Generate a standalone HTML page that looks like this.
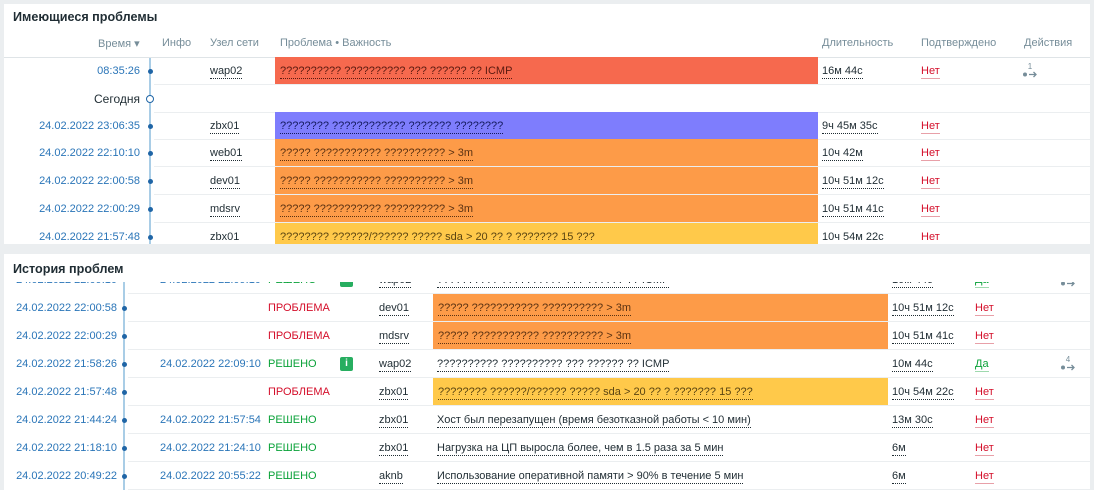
<!DOCTYPE html>
<html><head><meta charset="utf-8">
<style>
*{margin:0;padding:0;box-sizing:border-box}
body{width:1094px;height:490px;overflow:hidden;background:#ebeef0;font-family:"Liberation Sans",Arial,sans-serif;font-size:11px;color:#1f2c33;position:relative}
.panel{position:absolute;left:4px;width:1086px;background:#fff;overflow:hidden}
.h{position:absolute;left:9px;font-size:12.6px;font-weight:bold;color:#1f2c33}
.row{position:absolute;left:0;width:1086px;height:28px;line-height:28px}
.sep{position:absolute;height:1px;background:#ebeef0}
.c{position:absolute;top:0;white-space:nowrap}
.t{color:#2a75b8;text-align:right}
.u{border-bottom:1px dotted #1f2c33;line-height:13px;display:inline-block}
.nk{color:#d40e2a;border-bottom:1px solid #e8a0a8;line-height:13px;display:inline-block}
.da{color:#0aa239;border-bottom:1px solid #9fd9ae;line-height:13px;display:inline-block}
.prob{color:#d40e2a}
.ok{color:#0aa239}
.box{position:absolute;top:0;height:27px;padding-left:5px}
.dot{position:absolute;width:5px;height:5px;border-radius:50%;background:#1f65a6;top:12px}
.vl{position:absolute;width:2px;background:#a9cde6}
.gh{position:absolute;color:#768d99;font-size:11px}
.ic{position:absolute;top:7px;width:13px;height:14px;background:#27ae60;border-radius:2px;color:#fff;font-size:10px;font-weight:bold;line-height:14px;text-align:center}
.act{position:absolute;top:6px;color:#768d99;font-size:8px;line-height:8px;text-align:center;width:16px}
</style></head><body>

<div class="panel" style="top:4px;height:240px">
<div class="h" style="top:6px">Имеющиеся проблемы</div>
<div class="gh" style="left:94px;top:33px">Время ▾</div>
<div class="gh" style="left:158px;top:33px">Инфо</div>
<div class="gh" style="left:206px;top:33px">Узел сети</div>
<div class="gh" style="left:276px;top:33px">Проблема • Важность</div>
<div class="gh" style="left:818px;top:33px">Длительность</div>
<div class="gh" style="left:917px;top:33px">Подтверждено</div>
<div class="gh" style="left:1020px;top:33px">Действия</div>
<div class="sep" style="left:0;width:1086px;top:53px;background:#dfe4e7"></div>
<div class="vl" style="left:145px;top:54px;height:190px"></div>

<div class="row" style="top:53px">
 <div class="c t" style="left:0;width:136px">08:35:26</div><div class="dot" style="left:144px"></div>
 <div class="c" style="left:206px"><span class="u">wap02</span></div>
 <div class="box" style="left:271px;width:543px;background:#f6694e"><span class="u" style="color:#5a1a10;border-color:#5a1a10">?????????? ?????????? ??? ?????? ?? ICMP</span></div>
 <div class="c" style="left:818px"><span class="u">16м 44с</span></div>
 <div class="c" style="left:917px"><span class="nk">Нет</span></div>
 <div class="act" style="left:1018px">1<br><svg width="16" height="7" viewBox="0 0 16 7"><circle cx="3" cy="3.5" r="2" fill="#768d99"/><path d="M7 3.5h7M11.5 1l2.5 2.5-2.5 2.5" stroke="#768d99" stroke-width="1.3" fill="none"/></svg></div>
 <div class="sep" style="left:150px;width:936px;top:27px"></div>
</div>
<div class="row" style="top:81px">
 <div class="c" style="left:0;width:136px;text-align:right;font-size:12px;color:#1f2c33">Сегодня</div>
 <div style="position:absolute;left:142px;top:10px;width:8px;height:8px;border-radius:50%;border:1.5px solid #1f65a6;background:#fff"></div>
 <div class="sep" style="left:150px;width:936px;top:27px"></div>
</div>
<div class="row" style="top:108px">
 <div class="c t" style="left:0;width:136px">24.02.2022 23:06:35</div><div class="dot" style="left:144px"></div>
 <div class="c" style="left:206px"><span class="u">zbx01</span></div>
 <div class="box" style="left:271px;width:543px;background:#7e7dfd"><span class="u" style="color:#141a5e;border-color:#141a5e">???????? ???????????? ??????? ????????</span></div>
 <div class="c" style="left:818px"><span class="u">9ч 45м 35с</span></div>
 <div class="c" style="left:917px"><span class="nk">Нет</span></div>
 <div class="sep" style="left:150px;width:936px;top:27px"></div>
</div>
<div class="row" style="top:135px">
 <div class="c t" style="left:0;width:136px">24.02.2022 22:10:10</div><div class="dot" style="left:144px"></div>
 <div class="c" style="left:206px"><span class="u">web01</span></div>
 <div class="box" style="left:271px;width:543px;background:#fd9b48"><span class="u" style="color:#5b3212;border-color:#5b3212">????? ??????????? ?????????? &gt; 3m</span></div>
 <div class="c" style="left:818px"><span class="u">10ч 42м</span></div>
 <div class="c" style="left:917px"><span class="nk">Нет</span></div>
 <div class="sep" style="left:150px;width:936px;top:27px"></div>
</div>
<div class="row" style="top:163px">
 <div class="c t" style="left:0;width:136px">24.02.2022 22:00:58</div><div class="dot" style="left:144px"></div>
 <div class="c" style="left:206px"><span class="u">dev01</span></div>
 <div class="box" style="left:271px;width:543px;background:#fd9b48"><span class="u" style="color:#5b3212;border-color:#5b3212">????? ??????????? ?????????? &gt; 3m</span></div>
 <div class="c" style="left:818px"><span class="u">10ч 51м 12с</span></div>
 <div class="c" style="left:917px"><span class="nk">Нет</span></div>
 <div class="sep" style="left:150px;width:936px;top:27px"></div>
</div>
<div class="row" style="top:191px">
 <div class="c t" style="left:0;width:136px">24.02.2022 22:00:29</div><div class="dot" style="left:144px"></div>
 <div class="c" style="left:206px"><span class="u">mdsrv</span></div>
 <div class="box" style="left:271px;width:543px;background:#fd9b48"><span class="u" style="color:#5b3212;border-color:#5b3212">????? ??????????? ?????????? &gt; 3m</span></div>
 <div class="c" style="left:818px"><span class="u">10ч 51м 41с</span></div>
 <div class="c" style="left:917px"><span class="nk">Нет</span></div>
 <div class="sep" style="left:150px;width:936px;top:27px"></div>
</div>
<div class="row" style="top:219px">
 <div class="c t" style="left:0;width:136px">24.02.2022 21:57:48</div><div class="dot" style="left:144px"></div>
 <div class="c" style="left:206px"><span class="u">zbx01</span></div>
 <div class="box" style="left:271px;width:543px;background:#ffc94a"><span class="u" style="color:#5b4512;border-color:#5b4512">???????? ??????/?????? ????? sda &gt; 20 ?? ? ??????? 15 ???</span></div>
 <div class="c" style="left:818px"><span class="u">10ч 54м 22с</span></div>
 <div class="c" style="left:917px"><span class="nk">Нет</span></div>
</div>
</div>

<div class="panel" style="top:254px;height:236px">
<div class="h" style="top:8px">История проблем</div>
<div style="position:absolute;left:0;top:28px;width:1086px;height:208px;overflow:hidden">
<div class="vl" style="left:119px;top:0;height:208px"></div>
<div class="row" style="top:-16px">
 <div class="c t" style="left:0;width:113px">24.02.2022 22:09:10</div>
 <div class="c t" style="left:156px">24.02.2022 22:09:10</div>
 <div class="c ok" style="left:264px">РЕШЕНО</div>
 <div class="ic" style="left:336px">i</div>
 <div class="c" style="left:375px"><span class="u">wap02</span></div>
 <div class="c" style="left:433px"><span class="u">?????????? ?????????? ??? ?????? ?? ICMP</span></div>
 <div class="c" style="left:888px"><span class="u">10м 44с</span></div>
 <div class="c" style="left:971px"><span class="da">Да</span></div>
 <div class="act" style="left:1056px;top:14px"><svg width="16" height="7" viewBox="0 0 16 7"><circle cx="3" cy="3.5" r="2" fill="#768d99"/><path d="M7 3.5h7M11.5 1l2.5 2.5-2.5 2.5" stroke="#768d99" stroke-width="1.3" fill="none"/></svg></div>
 <div class="sep" style="left:124px;width:962px;top:27px"></div>
</div>
<div class="row" style="top:12px">
 <div class="c t" style="left:0;width:113px">24.02.2022 22:00:58</div><div class="dot" style="left:118px"></div>
 <div class="c prob" style="left:264px">ПРОБЛЕМА</div>
 <div class="c" style="left:375px"><span class="u">dev01</span></div>
 <div class="box" style="left:429px;width:455px;background:#fd9b48"><span class="u" style="color:#5b3212;border-color:#5b3212">????? ??????????? ?????????? &gt; 3m</span></div>
 <div class="c" style="left:888px"><span class="u">10ч 51м 12с</span></div>
 <div class="c" style="left:971px"><span class="nk">Нет</span></div>
 <div class="sep" style="left:124px;width:962px;top:27px"></div>
</div>
<div class="row" style="top:40px">
 <div class="c t" style="left:0;width:113px">24.02.2022 22:00:29</div><div class="dot" style="left:118px"></div>
 <div class="c prob" style="left:264px">ПРОБЛЕМА</div>
 <div class="c" style="left:375px"><span class="u">mdsrv</span></div>
 <div class="box" style="left:429px;width:455px;background:#fd9b48"><span class="u" style="color:#5b3212;border-color:#5b3212">????? ??????????? ?????????? &gt; 3m</span></div>
 <div class="c" style="left:888px"><span class="u">10ч 51м 41с</span></div>
 <div class="c" style="left:971px"><span class="nk">Нет</span></div>
 <div class="sep" style="left:124px;width:962px;top:27px"></div>
</div>
<div class="row" style="top:68px">
 <div class="c t" style="left:0;width:113px">24.02.2022 21:58:26</div><div class="dot" style="left:118px"></div>
 <div class="c t" style="left:156px">24.02.2022 22:09:10</div>
 <div class="c ok" style="left:264px">РЕШЕНО</div>
 <div class="ic" style="left:336px">i</div>
 <div class="c" style="left:375px"><span class="u">wap02</span></div>
 <div class="c" style="left:433px"><span class="u">?????????? ?????????? ??? ?????? ?? ICMP</span></div>
 <div class="c" style="left:888px"><span class="u">10м 44с</span></div>
 <div class="c" style="left:971px"><span class="da">Да</span></div>
 <div class="act" style="left:1056px">4<br><svg width="16" height="7" viewBox="0 0 16 7"><circle cx="3" cy="3.5" r="2" fill="#768d99"/><path d="M7 3.5h7M11.5 1l2.5 2.5-2.5 2.5" stroke="#768d99" stroke-width="1.3" fill="none"/></svg></div>
 <div class="sep" style="left:124px;width:962px;top:27px"></div>
</div>
<div class="row" style="top:96px">
 <div class="c t" style="left:0;width:113px">24.02.2022 21:57:48</div><div class="dot" style="left:118px"></div>
 <div class="c prob" style="left:264px">ПРОБЛЕМА</div>
 <div class="c" style="left:375px"><span class="u">zbx01</span></div>
 <div class="box" style="left:429px;width:455px;background:#ffc94a"><span class="u" style="color:#5b4512;border-color:#5b4512">???????? ??????/?????? ????? sda &gt; 20 ?? ? ??????? 15 ???</span></div>
 <div class="c" style="left:888px"><span class="u">10ч 54м 22с</span></div>
 <div class="c" style="left:971px"><span class="nk">Нет</span></div>
 <div class="sep" style="left:124px;width:962px;top:27px"></div>
</div>
<div class="row" style="top:124px">
 <div class="c t" style="left:0;width:113px">24.02.2022 21:44:24</div><div class="dot" style="left:118px"></div>
 <div class="c t" style="left:156px">24.02.2022 21:57:54</div>
 <div class="c ok" style="left:264px">РЕШЕНО</div>
 <div class="c" style="left:375px"><span class="u">zbx01</span></div>
 <div class="c" style="left:433px"><span class="u">Хост был перезапущен (время безотказной работы &lt; 10 мин)</span></div>
 <div class="c" style="left:888px"><span class="u">13м 30с</span></div>
 <div class="c" style="left:971px"><span class="nk">Нет</span></div>
 <div class="sep" style="left:124px;width:962px;top:27px"></div>
</div>
<div class="row" style="top:152px">
 <div class="c t" style="left:0;width:113px">24.02.2022 21:18:10</div><div class="dot" style="left:118px"></div>
 <div class="c t" style="left:156px">24.02.2022 21:24:10</div>
 <div class="c ok" style="left:264px">РЕШЕНО</div>
 <div class="c" style="left:375px"><span class="u">zbx01</span></div>
 <div class="c" style="left:433px"><span class="u">Нагрузка на ЦП выросла более, чем в 1.5 раза за 5 мин</span></div>
 <div class="c" style="left:888px"><span class="u">6м</span></div>
 <div class="c" style="left:971px"><span class="nk">Нет</span></div>
 <div class="sep" style="left:124px;width:962px;top:27px"></div>
</div>
<div class="row" style="top:180px">
 <div class="c t" style="left:0;width:113px">24.02.2022 20:49:22</div><div class="dot" style="left:118px"></div>
 <div class="c t" style="left:156px">24.02.2022 20:55:22</div>
 <div class="c ok" style="left:264px">РЕШЕНО</div>
 <div class="c" style="left:375px"><span class="u">aknb</span></div>
 <div class="c" style="left:433px"><span class="u">Использование оперативной памяти &gt; 90% в течение 5 мин</span></div>
 <div class="c" style="left:888px"><span class="u">6м</span></div>
 <div class="c" style="left:971px"><span class="nk">Нет</span></div>
 <div class="sep" style="left:124px;width:962px;top:27px"></div>
</div>
</div>
</div>
</body></html>
